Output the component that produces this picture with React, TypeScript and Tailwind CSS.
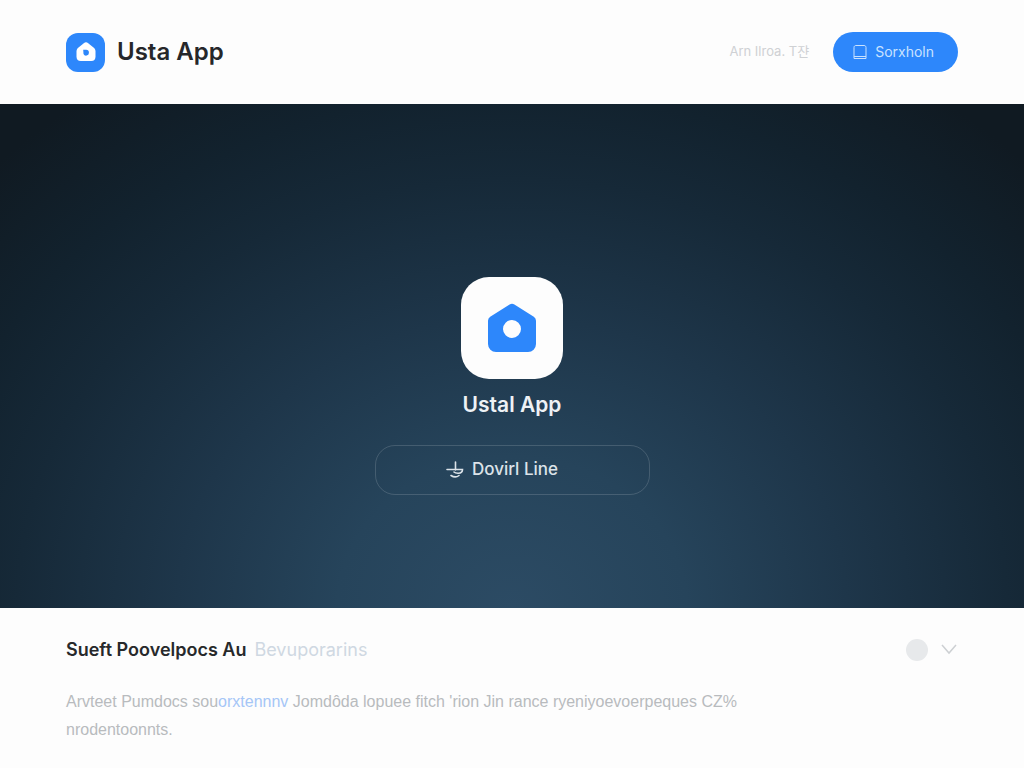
import { useState } from "react";

function HomeMark({ className }: { className: string }) {
  return (
    <svg viewBox="0 0 50 50" className={className} aria-hidden="true">
      <path
        fill="currentColor"
        fillRule="evenodd"
        d="M22.6 1.4a4.5 4.5 0 0 1 4.8 0l19.4 12.3A5 5 0 0 1 49 18v23a8 8 0 0 1-8 8H9a8 8 0 0 1-8-8V18a5 5 0 0 1 2.2-4.3ZM25 17a9 9 0 1 0 0 18 9 9 0 0 0 0-18Z"
      />
    </svg>
  );
}

function SmallHomeMark() {
  return (
    <svg viewBox="0 0 20 20" className="size-5" aria-hidden="true">
      <path
        fill="white"
        d="M7.8 1.2a3.500 3.500 0 0 1 4.400 0l5.300 4.300c1.300 1.100 2 2.300 2 4v5.200c0 2.700-1.600 4.300-4.200 4.300H4.700C2.100 19 .5 17.400.5 14.700V9.500c0-1.700.7-2.900 2-4Z"
      />
      <path
        fill="#2d87fb"
        d="M7.200 7.800h3a2.700 2.700 0 0 1 2.700 2.700v.4a2.800 2.800 0 0 1-5.400 1Z"
      />
    </svg>
  );
}

function Header() {
  return (
    <header className="flex items-center justify-between px-[66px] py-8">
      <div className="flex items-center gap-3">
        <span className="flex size-[39px] items-center justify-center rounded-xl bg-[#2d87fb]">
          <SmallHomeMark />
        </span>
        <span className="text-2xl leading-8 font-semibold text-[#26272a]">
          Usta App
        </span>
      </div>
      <nav className="flex items-center gap-6">
        <a href="#lines" className="text-[13px] text-[#cfd1d4]">
          Arn Ilroa. T쟌
        </a>
        <button
          type="button"
          className="flex h-10 items-center gap-2 rounded-full bg-[#2d87fb] pr-6 pl-5 text-sm text-[#c9e2ff]"
        >
          <svg viewBox="0 0 14 16" className="h-4 w-3.5" aria-hidden="true">
            <path
              d="M1 14.500V3.500C1 2 2 1.500 3 1.500h8c1.500 0 2 1 2 2v11ZM1 12.500h12"
              fill="none"
              stroke="currentColor"
            />
          </svg>
          Sorxholn
        </button>
      </nav>
    </header>
  );
}

function Hero() {
  return (
    <section className="flex flex-col items-center bg-[radial-gradient(ellipse_71%_125%_at_50%_100%,#2c4b64_0%,#26445b_24%,#1e364a_46%,#162938_68%,#12222e_82%,#101a22_100%)] pt-[173px] pb-[113px] text-[#eef2f5]">
      <div className="flex size-[102px] items-center justify-center rounded-[28px] bg-[#fdfdfd]">
        <HomeMark className="size-[50px] text-[#2d87fb]" />
      </div>
      <h1 className="mt-3 text-[21px] leading-7 font-semibold">Ustal App</h1>
      <button
        type="button"
        className="mt-[26px] flex h-[50px] w-[275px] items-center justify-center gap-2 rounded-[20px] border border-white/15 pr-5 text-[17px] font-medium text-[#dce3e9]"
      >
        <svg viewBox="0 0 18 18" className="size-[18px]" aria-hidden="true">
          <path
            d="M9.500 1v8M1 8.500h15.500c0 2.500-1.500 3.600-4 3.700-2 .1-3.500-.200-4.500-1.200M5 14.500c2.500 1.600 6 1.600 8 0"
            fill="none"
            stroke="currentColor"
            strokeWidth="1.600"
            strokeLinecap="round"
          />
        </svg>
        Dovirl Line
      </button>
    </section>
  );
}

function Details() {
  const [open, setOpen] = useState(true);

  return (
    <section className="px-[66px] py-7">
      <div className="flex items-center justify-between">
        <h2 className="flex gap-2 text-lg leading-7 font-semibold text-[#27292b]">
          Sueft Poovelpocs Au
          <span className="font-normal text-[#cfd8e2]">Bevuporarins</span>
        </h2>
        <div className="flex items-center gap-3">
          <span className="size-[22px] rounded-full bg-[#e7e9eb]" />
          <button
            type="button"
            aria-label="Toggle details"
            aria-expanded={open}
            onClick={() => setOpen(!open)}
          >
            <svg viewBox="0 0 18 18" className="size-[18px]" aria-hidden="true">
              <path
                d="m2 4 7 8 7-8"
                fill="none"
                stroke="#cdd0d3"
                strokeWidth="1.500"
              />
            </svg>
          </button>
        </div>
      </div>
      {open && (
        <p className="mt-6 max-w-[700px] font-['Liberation_Sans',sans-serif] text-base leading-7 text-[#b8bbbe]">
          Arvteet Pumdocs sou
          <a href="#details" className="text-[#a5c6f7]">
            orxtennnv
          </a>{" "}
          Jomdôda lopuee fitch 'rion Jin rance ryeniyoevoerpeques CZ%
          nrodentoonnts.
        </p>
      )}
    </section>
  );
}

export default function App() {
  return (
    <div className="min-h-screen bg-[#fdfdfd] font-['Inter','Noto_Sans_CJK_KR',sans-serif]">
      <Header />
      <main>
        <Hero />
        <Details />
      </main>
    </div>
  );
}
